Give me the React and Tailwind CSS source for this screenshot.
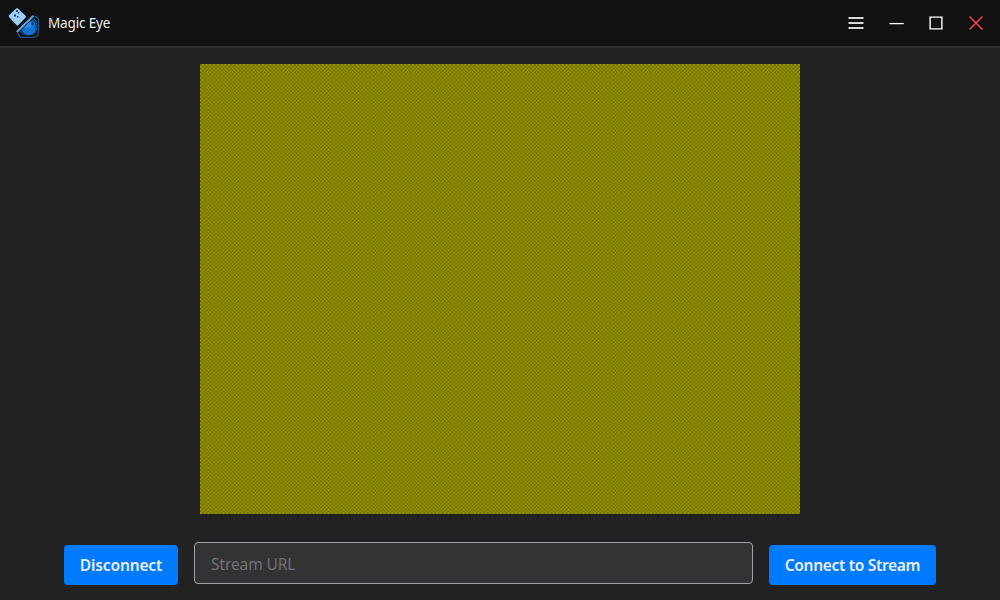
import React, { useEffect, useRef } from "react";

function Logo() {
  return (
    <svg className="h-8 w-8" viewBox="0 0 32 32" fill="none">
      <path d="M9.8 1.4 17.6 8.8Q18.4 9.6 17.6 10.4L10.5 18.1Q9.5 19 8.5 18L1.2 10.2Q.2 9 1.2 8L8.2 1.4Q9 .7 9.8 1.4Z" fill="#99cfff" />
      <path d="M8 3.2h1.8v1.8H8zM9.8 5h1.4v1.5H9.8zM6 7.5h2v2H6zM9 9h1.5v1.5H9z" fill="#102f4d" />
      <path d="M26 9.5Q30.5 9.5 30.5 14v10.5Q30.5 30.3 24.8 30.3H15Q10.4 30.3 10.3 26" stroke="#1b5687" strokeWidth="1.3" />
      <path d="m12.5 23.5 12.5-12.3q3.8 2 3.8 6.5v2.5q0 7.6-7.7 7.6h-2q-4.6 0-6.6-4.3Z" fill="#0b376d" stroke="#245f94" />
      <path d="m14.2 22.5 10.7-9q2.7 2 2.7 6.2a6.7 6.7 0 0 1-13.4 2.8Z" fill="#1672d1" />
      <path d="m15.5 20.5 6.5-6q3.2.2 4.3 2.3-3.8 5.2-10.8 3.7Z" fill="#2b8cec" />
      <circle cx="24.5" cy="16.8" r="1.5" fill="#082f61" />
      <path d="M8.8 25 25.5 8.6" stroke="#111111" strokeWidth="3" />
      <path d="M8.8 25 25.5 8.6" stroke="#63abea" strokeWidth="1.8" />
    </svg>
  );
}

function TitleBar() {
  return (
    <header className="flex h-12 shrink-0 items-center justify-between border-b-2 border-[#303030] bg-[#111111] pl-2">
      <div className="flex items-center gap-2">
        <Logo />
        <h1 className="text-[13.5px] leading-5 tracking-[-0.15px] text-[#eeeeee]">Magic Eye</h1>
      </div>
      <div className="flex text-white">
        <button aria-label="Menu" className="flex h-10 w-10 items-center justify-center">
          <svg className="h-4 w-4" viewBox="0 0 16 16" fill="none" stroke="#d5d7d8" strokeWidth="2">
            <path d="M.5 3h15M.5 8h15M.5 13h15" />
          </svg>
        </button>
        <button aria-label="Minimize" className="flex h-10 w-10 items-center justify-center">
          <svg className="h-4 w-4" viewBox="0 0 16 16" fill="none" stroke="currentColor" strokeWidth="1.3">
            <path d="M1.5 8.6h14.2" />
          </svg>
        </button>
        <button aria-label="Maximize" className="flex h-10 w-10 items-center justify-center">
          <svg className="h-4 w-4" viewBox="0 0 16 16" fill="none" stroke="currentColor" strokeWidth="1.4">
            <path d="M2.1 2.1h11.8v11.8H2.1Z" />
          </svg>
        </button>
        <button aria-label="Close" className="mr-1 flex h-10 w-10 items-center justify-center">
          <svg className="h-4 w-4" viewBox="0 0 16 16" fill="none" stroke="#ff4545" strokeWidth="1.5">
            <path d="m1.5 1.5 13 13m0-13-13 13" />
          </svg>
        </button>
      </div>
    </header>
  );
}

// Idle frame of the stream: a one-pixel checkerboard at 320x240.
function VideoFrame() {
  const ref = useRef(null);
  useEffect(() => {
    const ctx = ref.current.getContext("2d");
    for (let y = 0; y < 240; y++) {
      for (let x = 0; x < 320; x++) {
        ctx.fillStyle = (x + y) % 2 ? "#a09e00" : "#686800";
        ctx.fillRect(x, y, 1, 1);
      }
    }
  }, []);
  return <canvas ref={ref} width="320" height="240" className="h-[450px] w-[600px] max-w-none" />;
}

export default function App() {
  return (
    <div className="flex h-screen flex-col overflow-hidden bg-[#222222] font-['Noto_Sans',sans-serif]">
      <TitleBar />
      <main className="flex flex-1 flex-col items-center pt-4">
        <VideoFrame />
        <div className="mt-7 flex w-full items-start gap-4 px-16">
          <button className="mt-[3px] h-10 w-[114px] shrink-0 rounded bg-[#007bff] pt-0.5 text-[15.5px] font-semibold tracking-[-0.13px] whitespace-nowrap text-[#eeeeee]">Disconnect</button>
          <input
            type="text"
            placeholder="Stream URL"
            className="h-[42px] min-w-0 flex-1 rounded border border-[#a1a1aa] bg-[#333333] px-4 pt-px text-[15.5px] tracking-[-0.1px] text-[#eeeeee] placeholder:text-[#71717a]"
          />
          <button className="mt-[3px] h-10 w-[167px] shrink-0 rounded bg-[#007bff] pt-0.5 text-[15.5px] font-semibold tracking-[-0.3px] whitespace-nowrap text-[#eeeeee]">Connect to Stream</button>
        </div>
      </main>
    </div>
  );
}
